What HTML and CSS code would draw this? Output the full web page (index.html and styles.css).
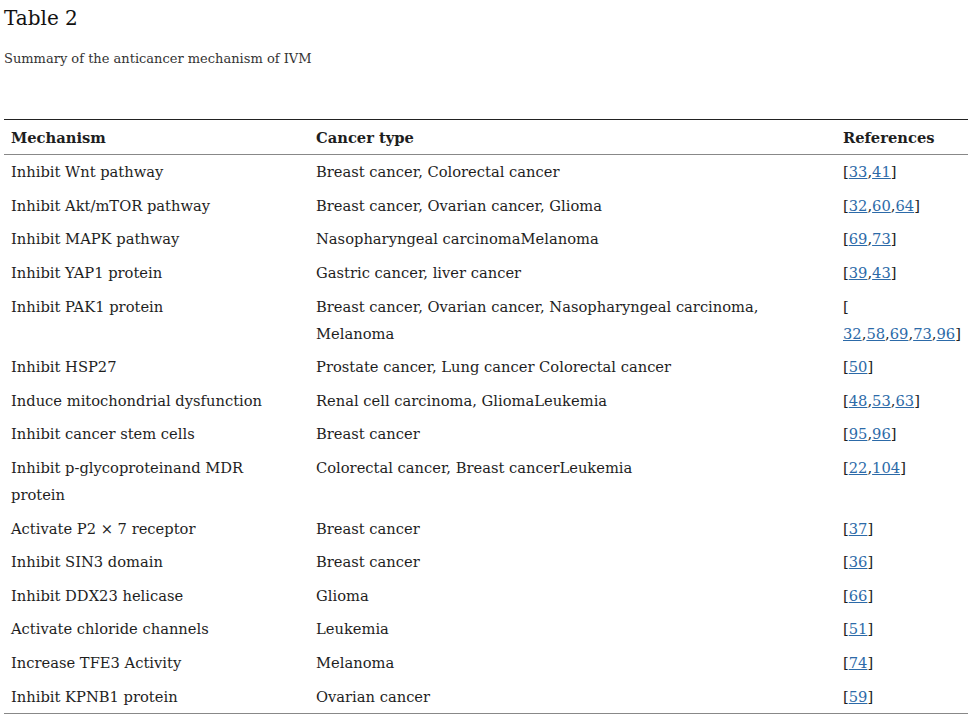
FILE: index.html
```html
<!DOCTYPE html>
<html>
<head>
<meta charset="utf-8">
<link rel="stylesheet" href="styles.css">
</head>
<body>
<div class="page">
  <h1 class="title">Table 2</h1>
  <p class="caption">Summary of the anticancer mechanism of IVM</p>
  <table class="tbl">
    <colgroup>
      <col class="c1"><col class="c2"><col class="c3">
    </colgroup>
    <thead>
      <tr><th>Mechanism</th><th>Cancer type</th><th>References</th></tr>
    </thead>
    <tbody>
      <tr><td>Inhibit Wnt pathway</td><td>Breast cancer, Colorectal cancer</td><td>[<a href="#">33</a>,<a href="#">41</a>]</td></tr>
      <tr><td>Inhibit Akt/mTOR pathway</td><td>Breast cancer, Ovarian cancer, Glioma</td><td>[<a href="#">32</a>,<a href="#">60</a>,<a href="#">64</a>]</td></tr>
      <tr><td>Inhibit MAPK pathway</td><td>Nasopharyngeal carcinomaMelanoma</td><td>[<a href="#">69</a>,<a href="#">73</a>]</td></tr>
      <tr><td>Inhibit YAP1 protein</td><td>Gastric cancer, liver cancer</td><td>[<a href="#">39</a>,<a href="#">43</a>]</td></tr>
      <tr><td>Inhibit PAK1 protein</td><td>Breast cancer, Ovarian cancer, Nasopharyngeal carcinoma,<br>Melanoma</td><td>[<br><a href="#">32</a>,<a href="#">58</a>,<a href="#">69</a>,<a href="#">73</a>,<a href="#">96</a>]</td></tr>
      <tr><td>Inhibit HSP27</td><td>Prostate cancer, Lung cancer Colorectal cancer</td><td>[<a href="#">50</a>]</td></tr>
      <tr><td>Induce mitochondrial dysfunction</td><td>Renal cell carcinoma, GliomaLeukemia</td><td>[<a href="#">48</a>,<a href="#">53</a>,<a href="#">63</a>]</td></tr>
      <tr><td>Inhibit cancer stem cells</td><td>Breast cancer</td><td>[<a href="#">95</a>,<a href="#">96</a>]</td></tr>
      <tr><td>Inhibit p-glycoproteinand MDR<br>protein</td><td>Colorectal cancer, Breast cancerLeukemia</td><td>[<a href="#">22</a>,<a href="#">104</a>]</td></tr>
      <tr><td>Activate P2 × 7 receptor</td><td>Breast cancer</td><td>[<a href="#">37</a>]</td></tr>
      <tr><td>Inhibit SIN3 domain</td><td>Breast cancer</td><td>[<a href="#">36</a>]</td></tr>
      <tr><td>Inhibit DDX23 helicase</td><td>Glioma</td><td>[<a href="#">66</a>]</td></tr>
      <tr><td>Activate chloride channels</td><td>Leukemia</td><td>[<a href="#">51</a>]</td></tr>
      <tr><td>Increase TFE3 Activity</td><td>Melanoma</td><td>[<a href="#">74</a>]</td></tr>
      <tr><td>Inhibit KPNB1 protein</td><td>Ovarian cancer</td><td>[<a href="#">59</a>]</td></tr>
    </tbody>
  </table>
</div>
</body>
</html>
```
FILE: styles.css
```css
html, body {
  margin: 0;
  padding: 0;
  background: #fff;
}
body {
  font-family: "DejaVu Serif", "Liberation Serif", serif;
  color: #1e1e1e;
}
.page {
  padding: 4px 6px 0 4px;
}
.title {
  margin: 0;
  font-size: 20px;
  font-weight: normal;
  line-height: 28px;
  color: #111;
}
.caption {
  margin: 18px 0 0 0;
  font-size: 13px;
  line-height: 18px;
  color: #333;
}
.tbl {
  margin-top: 51px;
  width: 964px;
  border-collapse: collapse;
  table-layout: fixed;
  font-size: 14.7px;
  line-height: 27px;
}
.c1 { width: 305px; }
.c2 { width: 527px; }
.c3 { width: 132px; }
.tbl thead tr {
  border-top: 1px solid #222;
  border-bottom: 1px solid #888;
}
.tbl tbody tr:last-child {
  border-bottom: 1px solid #888;
}
.tbl th {
  text-align: left;
  font-weight: bold;
  padding: 4px 7px 3px 7px;
  vertical-align: top;
}
.tbl td {
  padding: 3.3px 7px 3.3px 7px;
  vertical-align: top;
}
.tbl a {
  color: #2c6aa8;
  text-decoration: underline;
}
```
